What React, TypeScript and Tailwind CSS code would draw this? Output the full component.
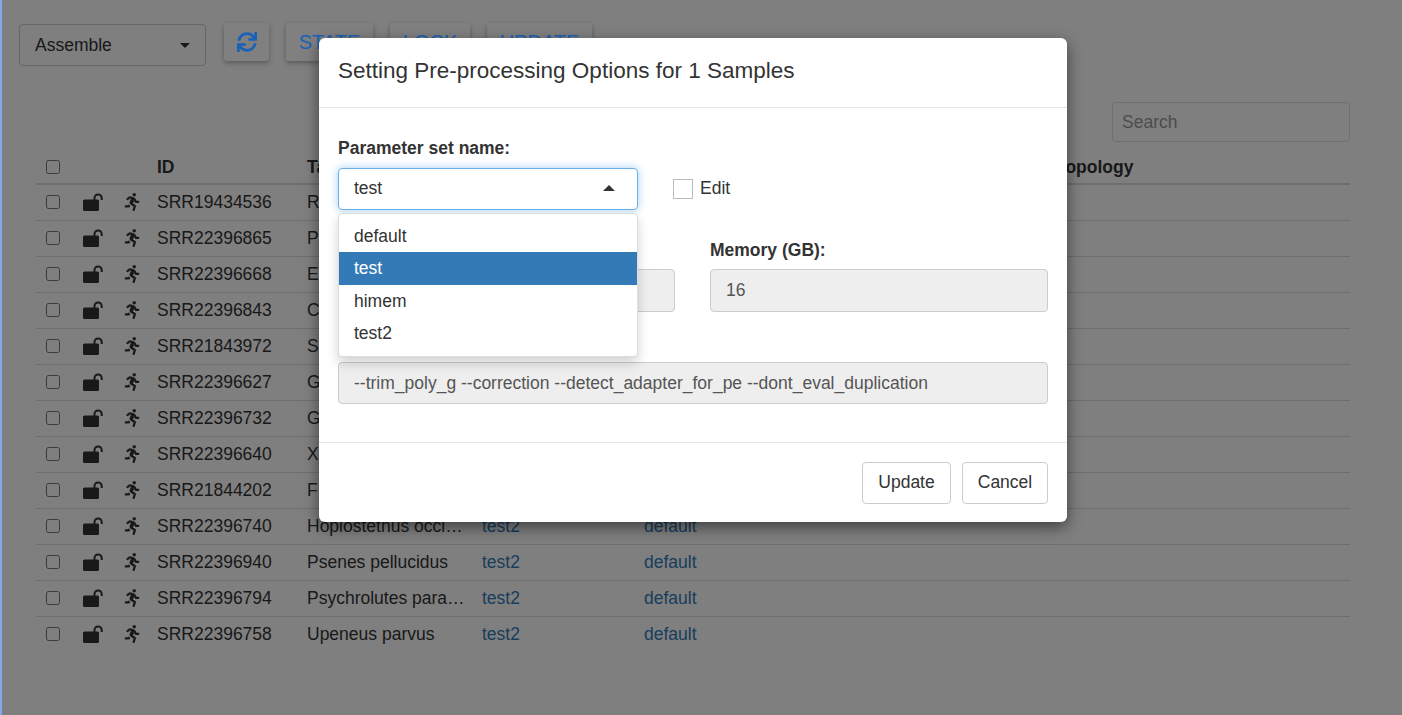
import { FaSync, FaRunning } from 'react-icons/fa'

const rows = [
  { id: 'SRR19434536', taxon: 'R' },
  { id: 'SRR22396865', taxon: 'P' },
  { id: 'SRR22396668', taxon: 'E' },
  { id: 'SRR22396843', taxon: 'C' },
  { id: 'SRR21843972', taxon: 'S' },
  { id: 'SRR22396627', taxon: 'G' },
  { id: 'SRR22396732', taxon: 'G' },
  { id: 'SRR22396640', taxon: 'X' },
  { id: 'SRR21844202', taxon: 'F' },
  { id: 'SRR22396740', taxon: 'Hoplostethus occi…', link: true },
  { id: 'SRR22396940', taxon: 'Psenes pellucidus', link: true },
  { id: 'SRR22396794', taxon: 'Psychrolutes para…', link: true },
  { id: 'SRR22396758', taxon: 'Upeneus parvus', link: true },
]

function UnlockIcon() {
  return (
    <svg width="21" height="18" viewBox="0 0 21 18">
      <rect x="0" y="6.5" width="16" height="11.5" rx="1.5" fill="currentColor" />
      <path d="M11.5 7V5a3.6 3.6 0 0 1 7.2 0v2" fill="none" stroke="currentColor" strokeWidth="2" />
    </svg>
  )
}

function ToolButton({ children, className }: { children: React.ReactNode; className: string }) {
  return (
    <div className={`h-[38px] flex items-center justify-center rounded-[3px] bg-[#808080] text-[#1a62b8] shadow-[0_2px_5px_rgba(0,0,0,0.3)] ${className}`}>
      {children}
    </div>
  )
}

export default function App() {
  return (
    <div className="relative h-[715px] overflow-hidden bg-white text-[17.5px] text-[#333333] font-['Liberation_Sans',Arial,sans-serif]">
      {/* page behind the modal */}
      <div className="pl-[19px] pr-[52px] pt-[23px]">
        <div className="flex items-start">
          <div className="mt-px h-[42px] w-[187px] flex items-center justify-between pl-[15px] pr-[15px] rounded-[4px] border border-[#cccccc]">
            <span>Assemble</span>
            <span className="w-0 h-0 border-x-[5px] border-x-transparent border-t-[5px] border-t-[#333333]" />
          </div>
        </div>
        <div className="flex justify-end mt-[36px]">
          <div className="h-[40px] w-[238px] flex items-center px-[9px] rounded-[4px] border border-[#dddddd] text-[#999999]">Search</div>
        </div>
        <div className="ml-[17px] mt-[7px]">
          <div className="flex items-center h-[32px] pt-[2px] border-b-2 border-[#dddddd] font-bold box-content">
            <div className="w-[121px] pl-[10px] flex"><input type="checkbox" className="w-[14px] h-[14px] m-0" /></div>
            <div className="w-[150px]">ID</div>
            <div className="w-[749px]">Taxon</div>
            <div>Topology</div>
          </div>
          {rows.map((r, i) => (
            <div key={r.id} className={`flex items-center ${i < rows.length - 1 ? 'h-[36px] border-b border-[#dddddd]' : 'h-[35px]'}`}>
              <div className="w-[47px] pl-[10px] mb-[2px] flex"><input type="checkbox" className="w-[14px] h-[14px] m-0" /></div>
              <div className="w-[40px] mb-[2px] flex text-[#333333]"><UnlockIcon /></div>
              <div className="w-[34px] mb-[2px] flex"><FaRunning size={18} /></div>
              <div className="w-[150px]">{r.id}</div>
              <div className="w-[175px] whitespace-nowrap">{r.taxon}</div>
              {r.link && <div className="w-[162px] text-[#337ab7]">test2</div>}
              {r.link && <div className="text-[#337ab7]">default</div>}
            </div>
          ))}
        </div>
      </div>

      <div className="absolute inset-0 bg-black/50" />
      <div className="absolute left-0 top-0 bottom-0 w-[2px] bg-[#86a6ec]" />

      {/* toolbar buttons keep their colour above the backdrop */}
      <div className="absolute left-[224px] top-[23px] flex">
        <ToolButton className="w-[45px]"><FaSync size={20} /></ToolButton>
        <ToolButton className="w-[87px] ml-[17px] text-[20px]">STATE</ToolButton>
        <ToolButton className="w-[80px] ml-[17px] text-[20px]">LOCK</ToolButton>
        <ToolButton className="w-[105px] ml-[17px] text-[20px]">UPDATE</ToolButton>
      </div>

      {/* modal */}
      <div className="absolute left-[319px] top-[38px] w-[748px] h-[484px] bg-white rounded-[6px] shadow-[0_5px_15px_rgba(0,0,0,0.5)]">
        <div className="h-[70px] flex items-center px-[19px] pb-[3px] border-b border-[#e5e5e5] text-[22.5px]">
          Setting Pre-processing Options for 1 Samples
        </div>
        <div className="relative h-[335px] px-[19px] pt-[30px] border-b border-[#e5e5e5]">
          <div className="font-bold h-[21px] leading-[21px]">Parameter set name:</div>
          <div className="flex items-center mt-[9px]">
            <div className="w-[300px] h-[42px] flex items-center justify-between pl-[15px] pr-[22px] pb-[2px] rounded-[4px] border border-[#66afe9] shadow-[0_0_8px_rgba(102,175,233,0.6)]">
              <span>test</span>
              <span className="w-0 h-0 border-x-[6px] border-x-transparent border-b-[6px] border-b-[#333333]" />
            </div>
            <div className="ml-[35px] w-[20px] h-[20px] border border-[#bbbbbb]" />
            <span className="ml-[7px] mb-[2px]">Edit</span>
          </div>

          <div className="flex mt-[30px]">
            <div className="w-[337px]">
              <div className="h-[21px]" />
              <div className="mt-[8px] h-[43px] rounded-[4px] border border-[#cccccc] bg-[#eeeeee]" />
            </div>
            <div className="ml-[35px] w-[338px]">
              <div className="font-bold h-[21px] leading-[21px]">Memory (GB):</div>
              <div className="mt-[8px] h-[43px] flex items-center px-[15px] rounded-[4px] border border-[#cccccc] bg-[#eeeeee] text-[#555555]">16</div>
            </div>
          </div>
          <div className="mt-[50px] w-[710px] h-[42px] flex items-center px-[15px] rounded-[4px] border border-[#cccccc] bg-[#eeeeee] text-[#555555]">
            --trim_poly_g --correction --detect_adapter_for_pe --dont_eval_duplication
          </div>

          {/* open dropdown */}
          <div className="absolute left-[19px] top-[105px] w-[300px] h-[144px] py-[5px] bg-white rounded-[4px] border border-[#dddddd] shadow-[0_6px_12px_rgba(0,0,0,0.175)]">
            <div className="h-[33px] flex items-center px-[15px] pt-[2px]">default</div>
            <div className="h-[33px] flex items-center px-[15px] bg-[#337ab7] text-white">test</div>
            <div className="h-[32px] flex items-center px-[15px]">himem</div>
            <div className="h-[33px] flex items-center px-[15px]">test2</div>
          </div>
        </div>
        <div className="flex justify-end gap-[11px] px-[19px] pt-[19px]">
          <div className="w-[89px] h-[42px] flex items-center justify-center pb-[2px] rounded-[4px] border border-[#cccccc]">Update</div>
          <div className="w-[86px] h-[42px] flex items-center justify-center pb-[2px] rounded-[4px] border border-[#cccccc]">Cancel</div>
        </div>
      </div>
    </div>
  )
}
